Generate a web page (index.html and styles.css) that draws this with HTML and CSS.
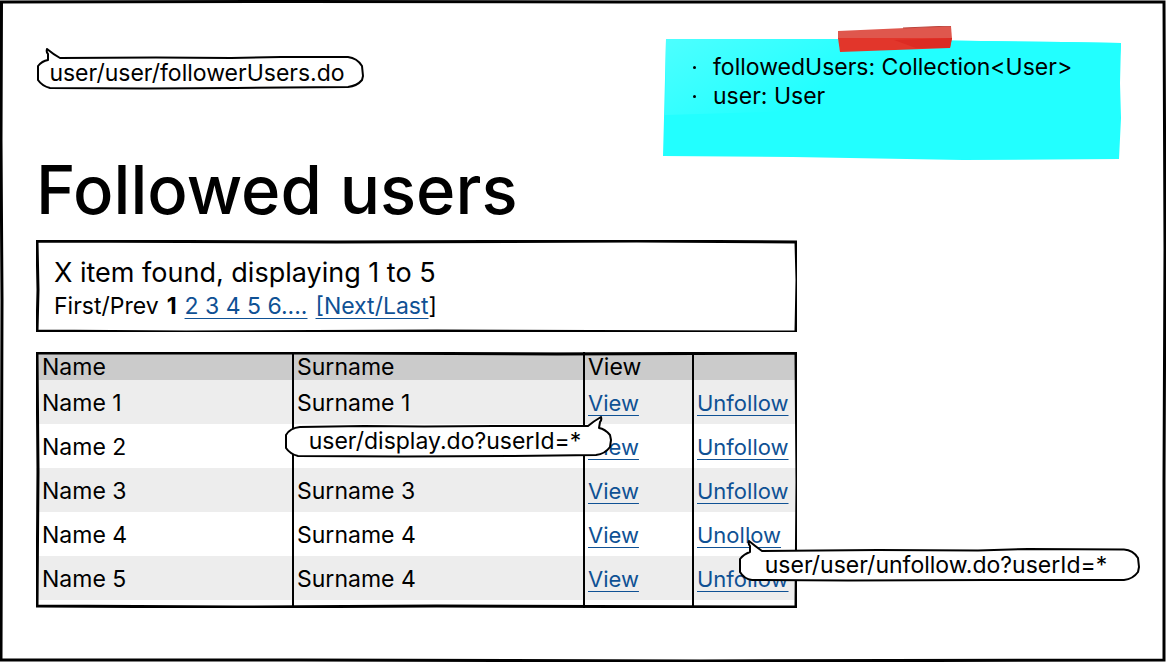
FILE: index.html
```html
<!DOCTYPE html>
<html lang="en">
<head>
<meta charset="utf-8">
<meta name="viewport" content="width=device-width, initial-scale=1">
<title>Followed users</title>
<link rel="stylesheet" href="styles.css">
</head>
<body>
<div class="page">
  <svg class="frame" viewBox="0 0 1166 662" preserveAspectRatio="none" aria-hidden="true">
    <path d="M0 2 L300 1.500 L620 2 L1164 2 L1165 250 L1164 480 L1164 660 L700 661 L300 660 L1 660 L2 300 L1 140 L1.500 1" />
  </svg>

  <header class="top">
    <div class="callout callout-page">
      <svg viewBox="0 0 328 42" preserveAspectRatio="none" aria-hidden="true">
        <path d="M11 1 Q10 4 12 6 L12 12 Q6 13 2 18 L2 32 Q6 38 14 40 L110 40.500 L200 40 L312 39 Q321 38 326 32 L327 28 L326 18 Q321 10 312 9 L245 9 L195 10 L120 9.500 L24 10 Q17 6 11 1 Z" />
      </svg>
      <span>user/user/followerUsers.do</span>
    </div>

    <aside class="note">
      <svg class="paper" viewBox="0 0 460 122" preserveAspectRatio="none" aria-hidden="true">
        <defs>
          <linearGradient id="sheen" x1="0" y1="0" x2="1" y2="0.300">
            <stop offset="0" stop-color="#4dffff" />
            <stop offset="0.500" stop-color="#22ffff" />
          </linearGradient>
        </defs>
        <path fill="#22ffff" d="M3 1 L170 1 L400 4 L458 5 L457 45 L458 80 L456 121 L300 122 L130 119 L0 118 L1 80 Z" />
        <path fill="url(#sheen)" d="M3 1 L170 1 L400 4 L458 5 L457 18 L340 32 L420 70 L270 72 L130 73 L2 77 Z" />
      </svg>
      <svg class="tape" viewBox="0 0 114 27" preserveAspectRatio="none" aria-hidden="true">
        <path fill="#df574d" d="M0 5 L113 0 L114 13 L0 13 Z" />
        <path fill="#e2362b" d="M0 12 L114 12 L112 22 L2 26 Z" />
        <path fill="#dc2b23" d="M56 14 L114 12 L112 22 L78 22 Z" />
        <path fill="none" stroke="#b9433b" stroke-width="1" d="M65 2 L113 0" />
      </svg>
      <ul>
        <li>followedUsers: Collection&lt;User&gt;</li>
        <li>user: User</li>
      </ul>
    </aside>
  </header>

  <main class="content">
    <h1>Followed users</h1>

    <section class="pager">
      <svg class="frame" viewBox="0 0 760 92" preserveAspectRatio="none" aria-hidden="true">
        <path d="M1 1 L300 2 L600 1 L759 2 L760 40 L759 92 L400 91 L150 92 L1 91 L2 50 Z" />
      </svg>
      <p class="summary">X item found, displaying 1 to 5</p>
      <nav class="pages" aria-label="Pages">
        <span>First/Prev</span>
        <strong>1</strong>
        <a href="#">2 3 4 5 6....</a>
        <span><a href="#">[Next/Last</a>]</span>
      </nav>
    </section>

    <div class="grid">
      <table>
        <colgroup><col class="c-name"><col class="c-surname"><col class="c-view"><col class="c-action"></colgroup>
        <thead>
          <tr><th scope="col">Name</th><th scope="col">Surname</th><th scope="col">View</th><td></td></tr>
        </thead>
        <tbody>
          <tr><td>Name 1</td><td>Surname 1</td><td><a href="#">View</a></td><td><a href="#">Unfollow</a></td></tr>
          <tr><td>Name 2</td><td></td><td><a href="#">View</a></td><td><a href="#">Unfollow</a></td></tr>
          <tr><td>Name 3</td><td>Surname 3</td><td><a href="#">View</a></td><td><a href="#">Unfollow</a></td></tr>
          <tr><td>Name 4</td><td>Surname 4</td><td><a href="#">View</a></td><td><a href="#">Unollow</a></td></tr>
          <tr><td>Name 5</td><td>Surname 4</td><td><a href="#">View</a></td><td><a href="#">Unfollow</a></td></tr>
        </tbody>
        <tfoot aria-hidden="true"><tr><td></td><td></td><td></td><td></td></tr></tfoot>
      </table>
      <svg class="frame" viewBox="0 0 760 256" preserveAspectRatio="none" aria-hidden="true">
        <path d="M1 1 L300 1 L520 2 L759 1 L760 130 L759 255 L400 254 L200 255 L1 254 L2 120 Z" />
      </svg>

      <div class="callout callout-display">
        <svg viewBox="0 0 328 42" preserveAspectRatio="none" aria-hidden="true">
          <path d="M317 1 Q318 4 316 6 L315 12 Q321 13 326 19 L327 24 L326 31 Q321 38 312 39 L230 40 L120 40.500 L14 40 Q6 38 2 32 L2 19 Q6 12 16 11 L80 10 L140 10.500 L210 10 L304 10 Q310 5 317 1 Z" />
        </svg>
        <span>user/display.do?userId=*</span>
      </div>

      <div class="callout callout-unfollow">
        <svg viewBox="0 0 402 42" preserveAspectRatio="none" aria-hidden="true">
          <path d="M11 1 Q10 4 12 6 L12 12 Q6 14 2 19 L2 32 Q6 39 14 40 L110 40.500 L250 40 L386 40 Q395 39 400 32 L401 27 L400 18 Q395 10 386 9.500 L290 9 L240 10.500 L140 10 L24 11 Q17 6 11 1 Z" />
        </svg>
        <span>user/user/unfollow.do?userId=*</span>
      </div>
    </div>
  </main>
</div>
</body>
</html>
```
FILE: styles.css
```css
* {
  box-sizing: border-box;
}

body {
  margin: 0;
  background: #fff;
  color: #000;
  font-family: Inter, "Open Sans", sans-serif;
  font-size: 23px;
  line-height: 28px;
}

h1, p, ul {
  margin: 0;
  padding: 0;
}

a {
  color: #0f5194;
  text-decoration: underline;
  text-decoration-thickness: 1px;
  text-underline-offset: 4px;
}

.page {
  position: relative;
  min-height: 100vh;
  padding: 26px 43px 54px 36px;
}

.frame {
  position: absolute;
  inset: 0;
  width: 100%;
  height: 100%;
  pointer-events: none;
}

.frame path {
  fill: none;
  stroke: #000;
  stroke-width: 3px;
  vector-effect: non-scaling-stroke;
}

.top {
  display: flex;
  justify-content: space-between;
  align-items: flex-start;
}

/* Speech bubbles */
.callout {
  position: relative;
  width: 328px;
  padding: 11px 16px 3px 10px;
  text-align: center;
  white-space: nowrap;
}

.callout svg {
  position: absolute;
  inset: 0;
  width: 100%;
  height: 100%;
}

.callout path {
  fill: #fff;
  stroke: #000;
  stroke-width: 2px;
  stroke-linejoin: round;
}

.callout span {
  position: relative;
}

.callout-page {
  margin-top: 22px;
}

.callout-display {
  position: absolute;
  top: 64px;
  left: 248px;
}

.callout-unfollow {
  position: absolute;
  top: 188px;
  left: 702px;
  width: 402px;
}

/* Sticky note */
.note {
  position: relative;
  width: 460px;
  min-height: 134px;
  padding: 27px 0 22px 50px;
}

.paper {
  position: absolute;
  top: 12px;
  left: 0;
  width: 100%;
  height: calc(100% - 12px);
}

.tape {
  position: absolute;
  top: 0;
  left: 38%;
  width: 114px;
  height: 27px;
}

.note ul {
  position: relative;
  list-style: none;
}

.note li {
  position: relative;
  line-height: 29px;
  white-space: nowrap;
}

.note li::before {
  content: "";
  position: absolute;
  top: 13px;
  left: -20px;
  width: 3px;
  height: 3px;
  border-radius: 50%;
  background: #000;
}

.content {
  max-width: 761px;
}

h1 {
  margin-bottom: 20px;
  font-size: 67px;
  font-weight: 500;
  line-height: 60px;
}

.pager {
  position: relative;
  padding: 16px 18px 10px;
}

.summary {
  font-size: 27px;
  line-height: 34px;
}

.pages {
  display: flex;
  gap: 8px;
  line-height: 32px;
}

/* User list */
.grid {
  position: relative;
  margin-top: 20px;
}

table {
  width: 100%;
  border-collapse: collapse;
  table-layout: fixed;
}

table a {
  font-size: 22px;
}

.c-name { width: 257px; }
.c-surname { width: 291px; }
.c-view { width: 109px; }

th, td {
  height: 44px;
  padding: 2px 3px 0;
  font-weight: 400;
  text-align: left;
}

th + th, th + td, td + td {
  border-left: 2px solid #000;
}

th:first-child, td:first-child {
  padding-left: 6px;
}

thead {
  background: #cbcbcb;
}

thead th, thead td {
  height: 28px;
  line-height: 26px;
}

tbody tr:nth-child(odd) {
  background: #ededed;
}

tfoot td {
  height: 8px;
}
```
